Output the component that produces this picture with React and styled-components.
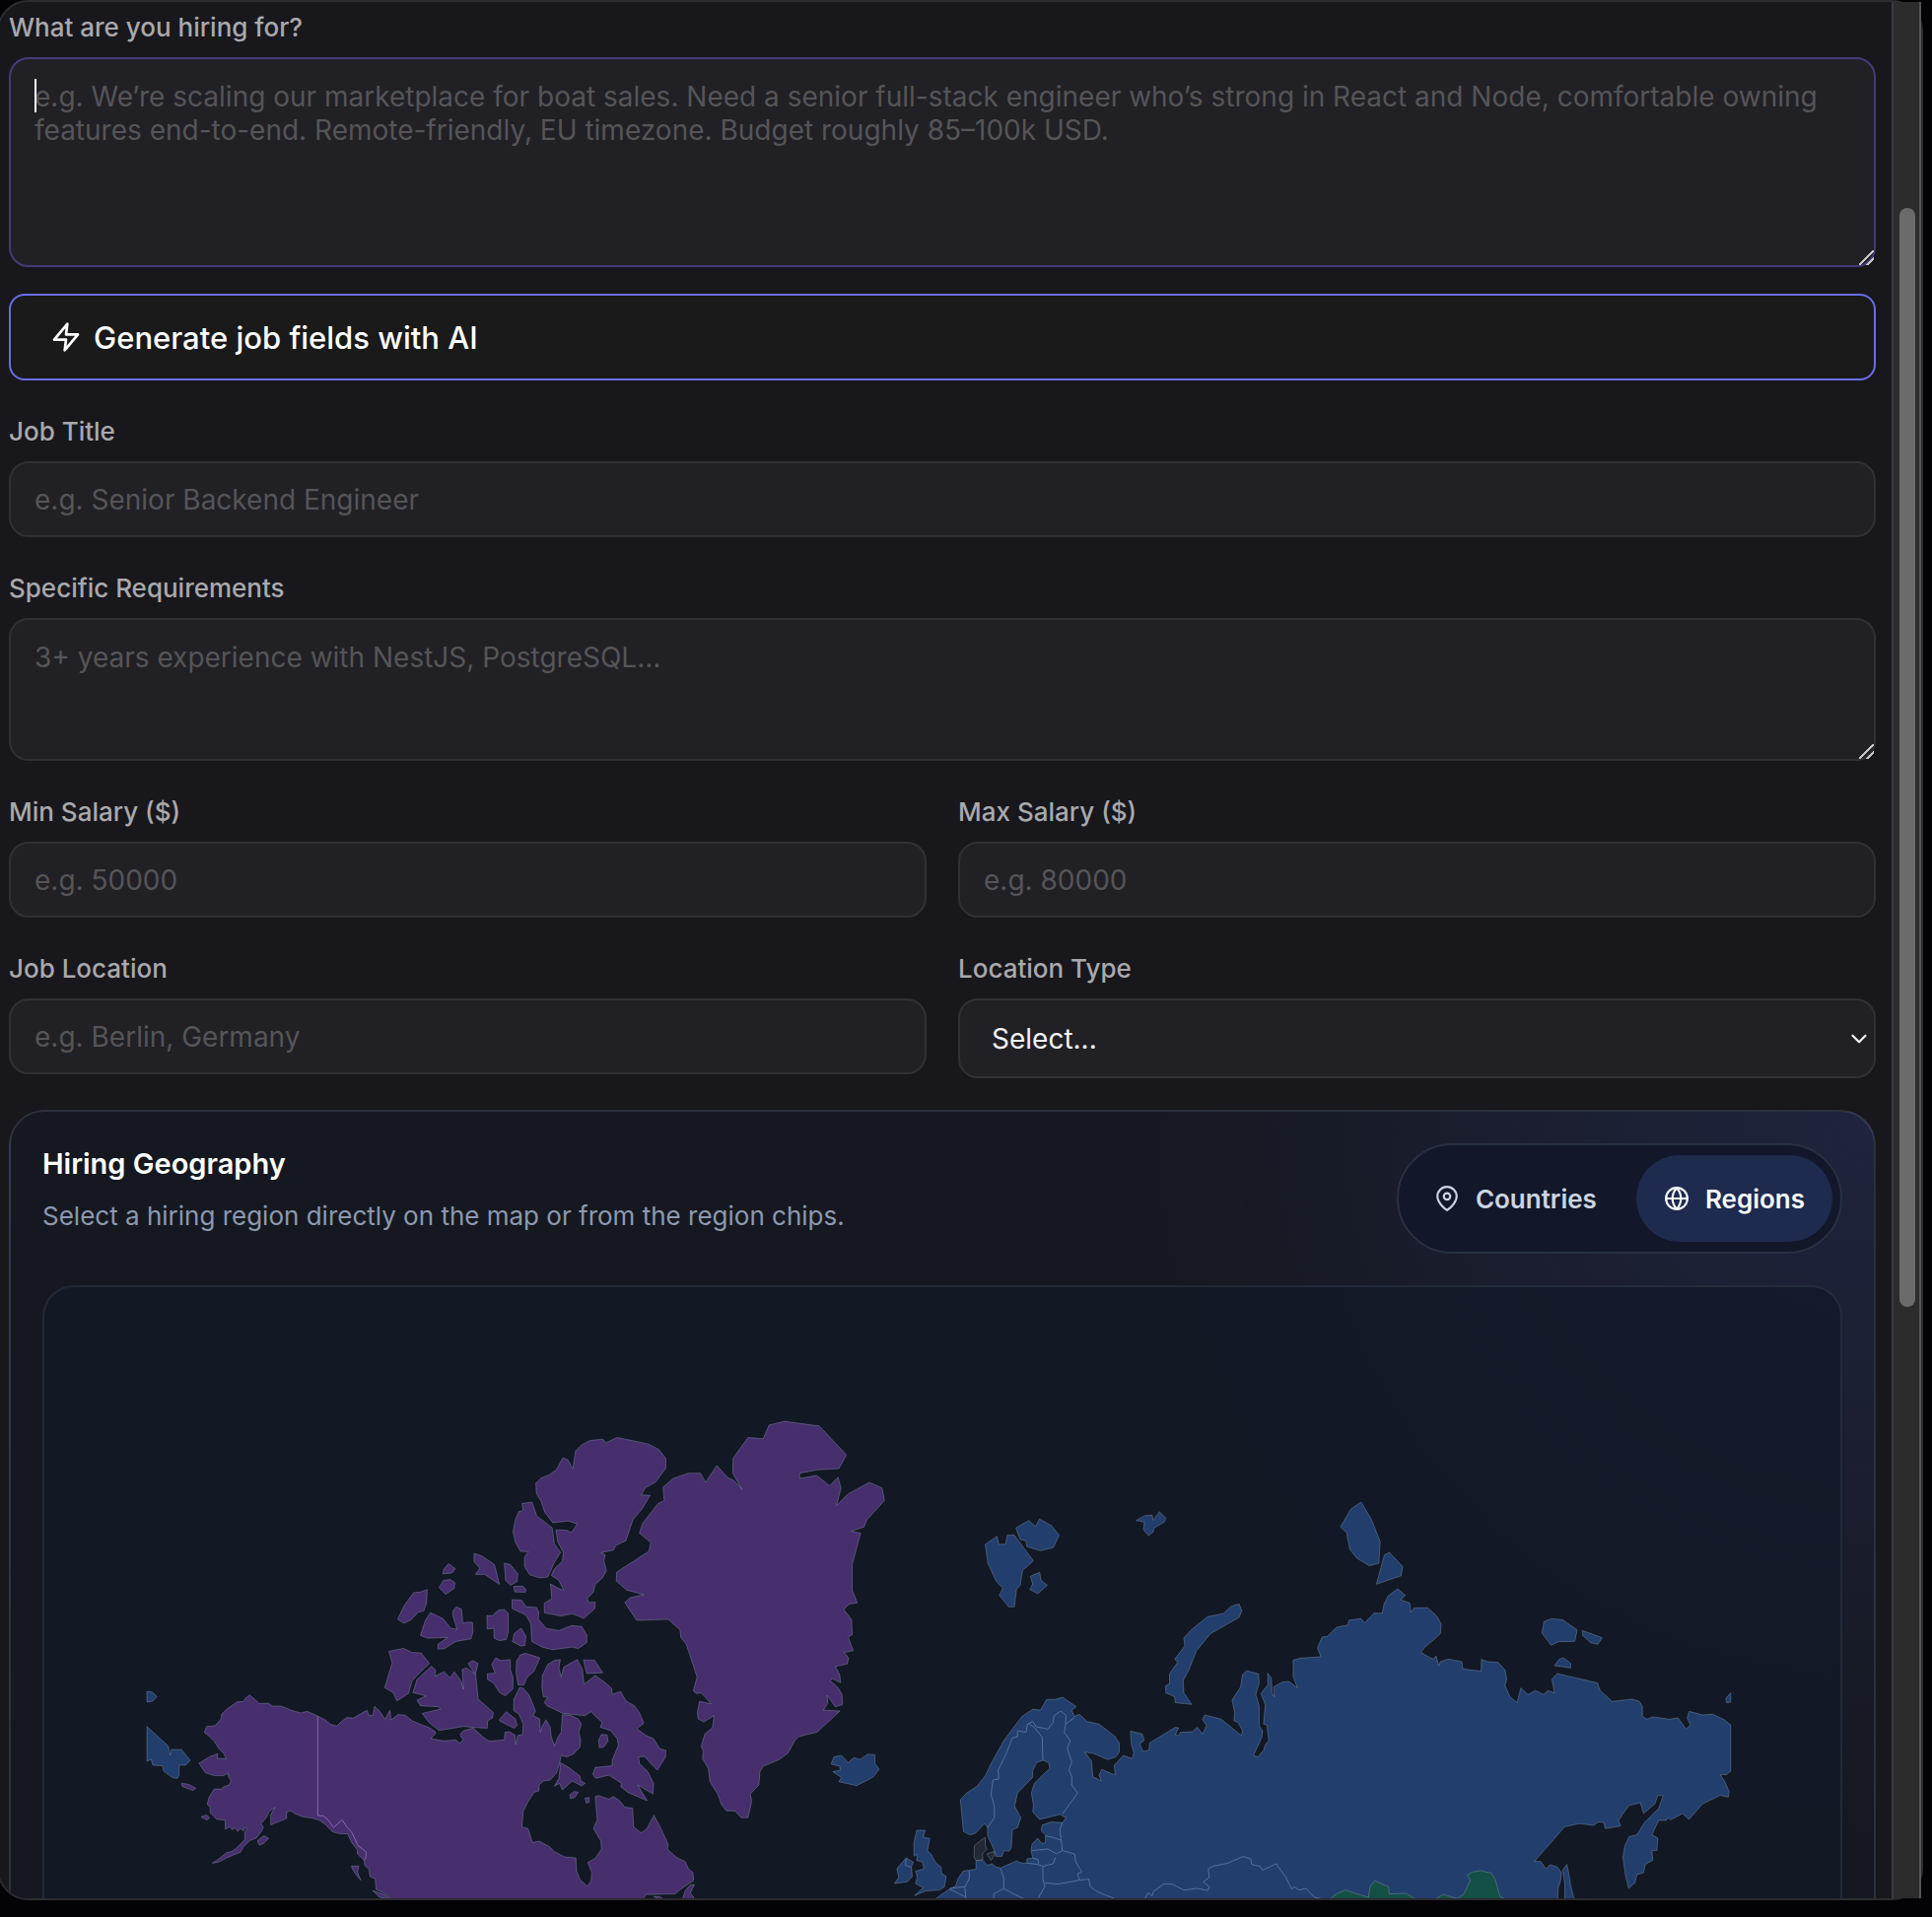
import { useState } from "react";
import styled, { createGlobalStyle } from "styled-components";
import { FiChevronDown, FiGlobe, FiMapPin, FiZap } from "react-icons/fi";

const GlobalStyle = createGlobalStyle`
  * { box-sizing: border-box; }
  body {
    margin: 0;
    background: #030305;
    font-family: Inter, "Liberation Sans", sans-serif;
  }
  button, input, textarea, select { font-family: inherit; }
`;

const Page = styled.div`
  height: 100vh;
  padding: 0 9px 17px 0;
  overflow: hidden;
`;

const Dialog = styled.main`
  display: flex;
  height: 100%;
  margin-left: -3px;
  border: 2px solid #2c2b30;
  border-radius: 32px;
  background: #18171c;
`;

const Scroller = styled.div`
  flex: 1;
  min-width: 0;
  overflow: hidden;
  padding: 10px 16px 0 10px;
  border-radius: 30px 0 0 30px;
`;

const ScrollTrack = styled.div`
  display: flex;
  flex-direction: column;
  flex: none;
  width: 30px;
  padding: 0 4px 0 6px;
  border: solid #3b3b3d;
  border-width: 0 2px;
  border-right-color: #555557;
  background: #2c2c2c;

  &::before { content: ""; flex: 209; }
  &::after { content: ""; flex: 600; }
`;

const ScrollThumb = styled.div`
  flex: 1115;
  border-radius: 8px;
  background: #6b6b6b;
`;

const Form = styled.form`
  display: flex;
  flex-direction: column;
  gap: 36px;
`;

const Group = styled.div`
  display: flex;
  flex-direction: column;
  gap: 27px;
`;

const Columns = styled.div`
  display: grid;
  grid-template-columns: 1fr 1fr;
  align-items: start;
  gap: 36px 32px;
`;

const Field = styled.div`
  display: flex;
  flex-direction: column;
  gap: 14px;
  min-width: 0;
`;

const Label = styled.label`
  color: #a9a9ac;
  font-size: 26px;
  font-weight: 500;
  line-height: 32px;
`;

const Input = styled.input`
  width: 100%;
  height: 77px;
  padding: 1px 24px 0;
  border: 2px solid #303035;
  border-radius: 20px;
  outline: none;
  background: #212025;
  color: #f4f4f5;
  font-size: 28px;
  line-height: 34px;

  &::placeholder { color: #555558; opacity: 1; }
`;

const TextArea = styled(Input).attrs({ as: "textarea" })`
  display: block;
  height: ${(props) => props.$height}px;
  padding: 21px 24px;
  border-color: ${(props) => (props.$active ? "#433c78" : "#303035")};
  resize: vertical;

  &::-webkit-resizer {
    background: linear-gradient(
      135deg,
      transparent 46%,
      #c4c4c6 46% 54%,
      transparent 54% 73%,
      #c4c4c6 73% 81%,
      transparent 81%
    );
  }
`;

const CaretWrap = styled.div`
  position: relative;
`;

const Caret = styled.span`
  position: absolute;
  top: 22px;
  left: 26px;
  width: 2px;
  height: 34px;
  background: #fff;
`;

const SelectWrap = styled.div`
  display: grid;
  align-items: center;

  > * { grid-area: 1 / 1; }

  svg {
    justify-self: end;
    margin-right: 4px;
    color: #f4f4f5;
    pointer-events: none;
  }
`;

const Select = styled(Input).attrs({ as: "select" })`
  height: 81px;
  padding: 0 32px;
  appearance: none;
`;

const GenerateButton = styled.button`
  display: flex;
  align-items: center;
  gap: 12px;
  width: 100%;
  height: 88px;
  padding: 0 40px;
  border: 2px solid #6a6ee8;
  border-radius: 16px;
  background: #1a1a1a;
  color: #fff;
  font-size: 31px;
  font-weight: 500;
`;

const GeoCard = styled.section`
  margin-top: 32px;
  padding: 32px;
  border: 2px solid rgba(148, 163, 184, 0.18);
  border-radius: 36px;
  background:
    radial-gradient(circle 740px at top right, rgba(72, 84, 180, 0.2), transparent),
    #151820;
`;

const GeoHeader = styled.div`
  display: flex;
  justify-content: space-between;
  align-items: flex-start;
  margin-bottom: 32px;
`;

const GeoText = styled.div`
  display: flex;
  flex-direction: column;
  gap: 12px;
`;

const GeoTitle = styled.h2`
  margin: 0;
  color: #fff;
  font-size: 29px;
  font-weight: 600;
  line-height: 42px;
`;

const GeoHint = styled.p`
  margin: 0;
  color: #8d99ae;
  font-size: 26px;
  line-height: 39px;
`;

const Toggle = styled.div`
  display: flex;
  gap: 12px;
  padding: 10px 8px;
  border: 2px solid #283043;
  border-radius: 56px;
  background: #12182a;
`;

const ToggleButton = styled.button`
  display: flex;
  align-items: center;
  gap: 16px;
  height: 88px;
  padding: 0 28px;
  border: 0;
  border-radius: 44px;
  background: ${(props) => (props.$active ? "#1f2a4f" : "transparent")};
  color: ${(props) => (props.$active ? "#f8fafc" : "#cbd5e1")};
  font-size: 26px;
  font-weight: 600;
`;

const MapBox = styled.div`
  overflow: hidden;
  border: 2px solid rgba(148, 163, 184, 0.13);
  border-radius: 32px;
  background: rgba(17, 24, 38, 0.7);
`;

const MapSvg = styled.svg`
  display: block;
  width: 100%;

  polygon, polyline {
    stroke-width: 1;
    stroke-linejoin: round;
  }
`;

const RegionShape = styled.polygon`
  fill: ${(props) => props.$fill};
  stroke: rgba(148, 163, 184, 0.38);
`;

const BorderLine = styled.polyline`
  fill: none;
  stroke: ${(props) => props.$stroke};
`;

// each sheet of the map has its own grid, this puts the points on the svg
const sheet = (ox, oy, kx, ky) => (points) =>
  points
    .trim()
    .split(/\s+/)
    .map((pair) => {
      const [x, y] = pair.split(",").map(Number);
      return (ox + x * kx).toFixed(1) + "," + (oy + y * ky).toFixed(1);
    })
    .join(" ");

const alaska = sheet(85, 195, 0.3333, 0.3333);
const arctic = sheet(335, 115, 0.3444, 0.3348);
const europe = sheet(815, 195, 0.3444, 0.3333);
const siberia = sheet(1255, 195, 0.4209, 0.3333);

const northAmerica = [
  // alaska coast, canada west coast, then back along the arctic coast
  [
    alaska(`577,720 545,706 525,711 497,703 466,690 440,690 425,681 400,683 388,672 370,656 357,666 350,677
      332,677 300,700 285,714 282,730 265,750 239,752 232,770 248,783 262,797 278,822 290,833 298,850 272,850
      272,835 250,843 215,864 235,893 262,902 290,902 306,894 304,903 313,917 308,930 290,936 285,943 262,942
      245,970 241,990 249,997 250,1015 270,1035 295,1037 296,1065 308,1058 318,1067 325,1060 334,1072 340,1063
      352,1070 355,1060 362,1063 355,1075 355,1097 330,1122 315,1133 300,1136 270,1160 256,1168 275,1165
      300,1152 325,1142 342,1135 350,1120 370,1100 390,1092 405,1072 412,1060 404,1048 418,1033 430,1010
      447,998 434,1020 434,1052 450,1045 482,1032 483,1012 495,1009 508,1018 530,1027 560,1031 580,1037
      600,1050 622,1073 640,1078 668,1079 680,1105 697,1127 698,1140 718,1160 720,1175 732,1187 737,1210
      752,1215 755,1248 775,1257 805,1280 820,1300`),
    arctic(`780,1530 790,1512 800,1497 885,1495 910,1475 940,1455 938,1430 925,1420 915,1397 890,1385 863,1360
      865,1345 840,1290 823,1257 802,1298 785,1310 763,1292 760,1235 737,1232 722,1213 705,1200 690,1208
      660,1197 650,1200 656,1270 645,1297 667,1335 668,1360 650,1387 628,1400 640,1430 638,1455 627,1472
      605,1452 595,1425 593,1386 560,1383 530,1367 515,1352 485,1335 465,1340 452,1297 434,1293 438,1245
      452,1215 470,1187 484,1183 485,1165 497,1153 517,1150 535,1130 545,1100 550,1075 565,1080 585,1072
      605,1050 607,1030 602,1005 609,980 600,965 575,953 553,952 550,1005 540,1020 530,1047 520,1017 517,990
      505,967 495,985 488,1005 487,965 467,955 474,942 470,930 455,892 438,872 427,870 410,905 410,940
      425,950 438,980 436,1012 422,1015 416,1042`),
    alaska(`1177,777 1160,768 1147,770 1145,793 1100,797 1080,785 1065,770 1050,757 1020,765 1010,777 1020,793
      1008,803 998,793 960,796 921,789 935,775 935,768 915,755 890,746 865,735 843,718 822,716 800,732
      797,703 782,730 765,705 750,691 745,718 734,720 727,703 710,712 685,727 665,725 650,737 635,751
      615,745 600,732`),
  ].join(" "),
  // greenland
  arctic(`713,520 808,457 814,430 780,402 790,372 835,312 853,303 850,262 880,236 925,220 960,220 975,248
    1008,197 1040,233 1060,243 1083,270 1055,220 1056,175 1100,112 1145,116 1162,74 1208,63 1310,77 1390,165
    1368,206 1305,210 1252,220 1252,236 1302,227 1341,258 1365,232 1374,265 1361,318 1395,283 1458,248
    1495,265 1502,303 1450,362 1442,383 1404,396 1432,402 1407,495 1407,575 1422,613 1398,617 1382,633
    1405,664 1407,710 1395,716 1410,758 1383,763 1396,780 1393,798 1357,806 1370,830 1373,855 1347,842
    1343,850 1365,870 1377,890 1378,922 1357,928 1333,893 1335,918 1322,938 1371,941 1303,1005 1250,1018
    1237,1032 1218,1068 1192,1088 1145,1108 1135,1125 1132,1165 1107,1192 1111,1215 1100,1264 1080,1264
    1062,1244 1036,1243 1022,1225 1012,1195 988,1155 983,1115 966,1085 968,1060 962,1048 973,1010 995,992
    1000,955 970,974 953,965 951,945 957,912 992,919 962,886 947,888 939,879 950,838 918,738 902,717
    900,695 865,663 772,666 737,612 753,597 793,588 742,574 712,547`),
  // ellesmere, axel heiberg
  arctic(`475,250 490,235 515,225 535,210 555,173 570,180 584,208 592,152 610,134 635,121 673,117 680,128
    715,112 805,131 837,148 858,175 858,205 828,247 797,265 785,286 812,287 787,330 762,360 740,425 710,440
    704,453 667,461 680,468 675,485 683,515 672,537 650,557 645,580 627,600 630,612 650,611 649,630 617,660
    583,646 548,653 500,643 500,614 522,601 518,556 537,567 557,575 543,545 521,530 530,510 553,487 556,460
    540,430 534,392 566,393 580,400 597,374 570,365 525,370 502,340 490,305 477,283`),
  arctic(`434,312 464,308 478,350 523,385 530,435 548,460 530,490 510,535 485,537 457,528 442,503 442,475
    453,458 430,457 415,430 408,398 415,360 425,337 438,332`),
  // baffin
  arctic(`493,870 494,835 510,800 530,787 547,785 543,810 550,838 557,808 597,785 612,815 617,860 650,833
    680,855 698,872 700,890 725,882 740,910 765,925 780,945 793,978 772,995 800,1015 822,1025 840,1055
    858,1060 857,1080 833,1120 805,1090 795,1078 778,1080 780,1100 805,1125 822,1160 820,1192 775,1165
    803,1213 745,1187 725,1170 728,1160 690,1135 652,1145 643,1133 650,1112 700,1107 700,1090 718,1045
    715,1025 695,1000 665,990 670,975 637,943 620,955 555,948 508,925 500,915 510,900 497,897`),
  // smaller arctic islands
  arctic(`293,463 318,472 353,497 368,557 325,527 297,527 310,508 293,488`),
  arctic(`382,493 400,497 422,525 420,548 400,560 386,545`),
  arctic(`410,563 437,563 446,573 444,581 413,580`),
  arctic(`218,494 238,510 228,523 201,525 203,513`),
  arctic(`190,567 203,545 222,542 237,552 234,570 209,587`),
  arctic(`68,663 88,620 115,582 135,580 155,573 153,615 145,637 128,642 107,665 86,675`),
  arctic(`135,712 150,665 165,643 200,660 225,690 243,693 230,650 232,635 241,625 256,632 260,675 272,672
    288,672 290,700 284,722 240,730 205,752 186,753 187,738 215,718 155,720`),
  arctic(`331,652 347,652 365,635 382,633 394,645 394,700 388,724 368,728 352,720 352,690 332,692`),
  arctic(`405,603 433,605 447,625 477,627 484,642 482,662 505,690 543,697 580,682 610,685 625,710 625,733
    600,752 583,747 525,755 495,748 463,730 460,675 445,650 405,630`),
  arctic(`406,730 412,705 432,690 446,715 443,742 430,744`),
  arctic(`42,760 85,751 110,763 137,765 162,797 145,812 110,850 100,888 66,910 55,885 30,870 52,795`),
  arctic(`168,805 180,818 177,835 205,822 222,840 235,822 255,850 262,875 258,815 270,810 298,830 305,905
    350,945 347,962 333,970 332,993 260,988 190,1000 160,975 140,948 195,935 188,928 135,925 125,908 152,895
    113,885 125,845`),
  arctic(`275,797 290,788 305,797 297,830 285,812`),
  arctic(`345,800 357,780 372,788 400,785 400,817 408,840 407,875 385,895 368,885 352,858 333,845 332,828
    355,826`),
  arctic(`417,825 418,790 430,770 445,766 487,780 470,820 450,838 440,862 423,862`),
  arctic(`367,967 388,943 415,965 420,985 412,993 370,972`),
  arctic(`615,786 648,787 672,825 625,827`),
  arctic(`660,1030 668,1012 685,1013 688,1032 675,1050 662,1052`),
  arctic(`548,1098 572,1112 605,1138 607,1152 620,1160 610,1168 582,1153 553,1180 545,1160 530,1168 543,1145`),
  arctic(`575,1195 587,1185 600,1187 590,1203 577,1206`),
  arctic(`620,1205 632,1203 632,1217 624,1220`),
  arctic(`905,1520 915,1485 930,1468 942,1467 930,1492 940,1505 935,1520`),
  arctic(`822,1503 840,1504 852,1511 838,1511`),
  // pacific islands
  alaska(`393,1100 413,1085 428,1093 412,1108 400,1114`),
  alaska(`163,925 183,928 206,940 197,947 165,935`),
  alaska(`222,1027 240,1022 248,1030 240,1037`),
  alaska(`680,1177 702,1177 698,1195 708,1220 695,1205 683,1187`),
  alaska(`745,1252 775,1262 798,1278 765,1272`),
];

const eurasia = [
  [
    europe(`240,1290 258,1277 300,1247 318,1238 325,1215 340,1192 358,1190 378,1187 378,1160 398,1160 412,1175
      425,1170 437,1180 450,1183 497,1161 512,1168 528,1168 528,1155 545,1153 540,1130 543,1110 560,1092
      570,1107 582,1107 583,1083 570,1070 573,1052 600,1043 633,1045 643,1030 625,1020 565,1035 545,1012
      547,990 541,955 550,925 595,880 592,862 575,855 557,862 545,885 545,907 500,955 492,995 510,1030
      500,1060 485,1067 482,1120 475,1132 460,1130 455,1147 437,1148 430,1125 412,1085 412,1060 403,1047
      377,1077 360,1082 341,1072 332,975 350,955 378,937 405,903 420,870 460,795 500,740 515,720 545,700
      568,702 586,670 610,670 633,663 673,692 660,703 668,722 683,715 705,737 740,745 785,780 800,802
      800,830 790,845 765,853 725,835 698,830 718,857 722,905 747,918 740,900 748,883 788,900 785,870
      812,840 838,850 843,832 835,805 833,766 868,775 873,795 860,805 870,828 887,825 890,802 965,755
      975,756 965,778 975,780 980,770 1015,768 1030,755 1045,775 1057,750 1045,730 1052,717 1100,730
      1160,780 1163,765 1150,740 1138,735 1140,710 1132,672 1157,632 1163,595 1175,582 1210,592 1212,620
      1202,655 1212,690 1212,750 1222,765 1220,785 1195,840 1207,845 1225,825 1230,808 1240,795 1235,748
      1225,745 1230,685 1217,652 1238,625 1237,590 1248,605 1250,650 1257,662 1255,632 1280,617 1300,615
      1325,635 1312,600 1312,550 1335,544`),
    siberia(`95,540 87,513 98,480 110,478 133,450 160,443 163,428 192,424 200,437 223,407 243,407 247,380
      257,355 280,333 299,353 287,367 309,376 312,405 320,391 353,391 375,417 385,440 383,470 345,512
      336,527 365,547 373,538 379,568 383,555 402,547 435,555 437,577 481,584 482,548 497,555 522,557
      539,580 543,608 539,628 550,660 568,680 577,635 594,655 612,643 632,655 642,643 658,650 652,608
      665,591 762,620 768,643 797,676 845,669 862,675 870,690 870,722 881,730 895,723 935,730 956,726
      975,760 986,747 978,727 983,706 1015,717 1040,715 1068,732 1083,748 1083,888 1073,899 1057,899
      1068,918 1079,950 1077,967 1057,962 1015,988 982,1035 967,1017 938,1037 932,1030 927,1038 909,1038
      893,1082 907,1092 905,1130 893,1130 895,1160 877,1172 873,1197 857,1203 852,1228 837,1245 830,1210
      823,1150 828,1115 838,1088 857,1082 875,1045 910,1000 920,963 907,962 900,988 873,1017 865,984
      837,993 812,1038 818,1055 780,1063 778,1045 765,1043 752,1053 718,1048 683,1057 610,1163 625,1163
      637,1185 648,1173 665,1180 675,1197 673,1220 667,1245 666,1290`),
  ].join(" "),
  // chukotka, cut off by the date line
  alaska(`57,752 122,812 128,840 132,822 163,823 189,855 175,870 155,870 155,900 150,910 135,908 108,888
    105,872 75,870 70,852 57,858`),
  alaska(`57,645 72,647 88,661 75,675 57,678`),
  siberia(`1083,650 1071,667 1073,680 1083,678`),
  // iceland
  arctic(`1345,1102 1353,1080 1375,1075 1395,1097 1412,1082 1430,1088 1452,1072 1474,1073 1474,1100 1486,1117
    1468,1142 1420,1167 1367,1155 1376,1143 1350,1125 1372,1120 1370,1108`),
  // svalbard, franz josef land, novaya zemlya
  europe(`405,198 440,173 445,198 465,197 470,170 490,169 547,248 515,277 508,322 497,335 491,388 474,388
    447,353 457,330 437,310 413,255`),
  europe(`495,148 533,125 553,143 565,121 600,140 623,170 605,208 567,217 528,205 525,187 508,183`),
  europe(`538,295 565,283 570,308 588,322 560,348 537,335 545,318`),
  europe(`850,125 875,110 897,109 900,125 918,98 937,118 933,130 902,148 900,160 886,171 871,153 874,130`),
  europe(`937,628 948,622 948,592 972,557 963,548 993,507 990,482 1012,458 1060,418 1107,408 1128,387 1153,379
    1161,400 1153,420 1068,470 1027,522 1005,580 988,612 990,650 1013,685 965,680 963,662 937,650`),
  // severnaya zemlya, new siberian islands, sakhalin
  siberia(`142,145 168,90 192,69 217,122 238,190 235,255 212,263 182,240 165,213 157,162`),
  siberia(`229,319 248,230 260,222 292,265 289,293`),
  siberia(`628,468 633,433 650,424 677,427 713,458 707,493 668,494 650,505`),
  siberia(`725,460 773,482 763,502 745,497 726,475`),
  siberia(`658,567 670,547 680,543 697,560 697,574`),
  siberia(`678,1190 688,1172 692,1195 697,1235 708,1290 683,1290 683,1230`),
  // great britain, ireland
  europe(`195,1107 203,1068 228,1068 222,1090 242,1093 235,1130 245,1140 260,1168 275,1180 277,1200 290,1208
    285,1240 270,1250 230,1253 197,1267 222,1243 200,1230 205,1210 200,1193 225,1185 220,1165 203,1160
    205,1140 195,1147`),
  europe(`145,1185 172,1152 193,1165 188,1180 190,1210 175,1225 138,1230 150,1212`),
];

const asia = [
  siberia(`100,1290 117,1277 135,1260 155,1250 178,1260 210,1272 213,1240 225,1222 258,1240 260,1262 300,1260
    322,1277 330,1290`),
  siberia(`360,1290 372,1277 390,1263 412,1272 425,1275 440,1262 455,1220 448,1205 460,1195 480,1191 505,1198
    515,1217 527,1270 560,1290`),
];

const unassigned = [
  europe(`372,1150 373,1115 388,1102 405,1090 405,1115 410,1125 397,1140 398,1158 378,1160`),
  europe(`410,1140 432,1132 432,1145 422,1160`),
];

const alaskaBorder = alaska(`577,720 577,1023 595,1025 610,1038 625,1060 638,1048 652,1037 665,1057 680,1073
  700,1115 725,1134 723,1152 718,1160`);

const europeBorders = [
  europe(`412,1060 432,1030 432,995 422,960 428,915 445,912 443,885 465,840 485,787 500,783 500,765 525,770
    530,745 545,737 555,753 590,760 605,740 607,720 627,705 643,718 642,745 668,725`),
  europe(`532,742 550,755 573,785 575,855`),
  europe(`642,745 638,770 655,795 647,820 660,860 652,885 660,905 660,930 677,955 633,1018`),
  europe(`633,1045 625,1065 628,1090 632,1130`),
  europe(`583,1085 605,1090 628,1098`),
  europe(`543,1130 590,1125 615,1140 632,1130 668,1140 672,1165 690,1195 677,1200 683,1220`),
  europe(`528,1168 560,1172 575,1178 605,1170 612,1150`),
  europe(`545,1153 560,1157 562,1170`),
  europe(`575,1178 575,1215 580,1240 560,1277`),
  europe(`580,1228 620,1232 683,1220 710,1217 715,1240 735,1255 788,1277`),
  europe(`450,1183 460,1215 460,1245 485,1260 520,1277`),
  europe(`460,1245 430,1262 430,1277`),
  europe(`358,1190 358,1215 345,1240 348,1277`),
  europe(`300,1245 345,1240`),
  europe(`300,1247 345,1270`),
  europe(`172,1155 170,1175 188,1180`),
  europe(`875,1277 885,1258 897,1268 900,1255 930,1232 955,1232 990,1250 1030,1245 1060,1252 1065,1240
    1047,1225 1065,1212 1062,1185 1075,1178 1120,1168 1165,1148 1187,1155 1190,1172 1215,1178 1222,1190
    1262,1170 1290,1210 1308,1248 1315,1240 1330,1250 1350,1245 1375,1272 1398,1277`),
];

const regions = [
  { name: "North America", fill: "#472e6d", shapes: northAmerica },
  { name: "Europe", fill: "#213e6d", shapes: eurasia },
  { name: "Asia", fill: "#145044", shapes: asia },
  { name: "Unassigned", fill: "#232935", shapes: unassigned },
];

function RegionMap() {
  return (
    <MapSvg viewBox="0 0 1822 660" role="img" aria-label="World map of hiring regions">
      {regions.map((region) => (
        <g key={region.name}>
          {region.shapes.map((points, i) => (
            <RegionShape key={i} $fill={region.fill} points={points} />
          ))}
        </g>
      ))}
      <BorderLine $stroke="#8668a6" points={alaskaBorder} />
      {europeBorders.map((points, i) => (
        <BorderLine key={i} $stroke="#566f9e" points={points} />
      ))}
    </MapSvg>
  );
}

function TextField({ id, label, placeholder }) {
  return (
    <Field>
      <Label htmlFor={id}>{label}</Label>
      <Input id={id} placeholder={placeholder} />
    </Field>
  );
}

export default function App() {
  const [mode, setMode] = useState("regions");
  const [brief, setBrief] = useState("");

  return (
    <Page>
      <GlobalStyle />
      <Dialog>
        <Scroller>
          <Form onSubmit={(e) => e.preventDefault()}>
            <Group>
              <Field>
                <Label htmlFor="brief">What are you hiring for?</Label>
                <CaretWrap>
                  <TextArea
                    id="brief"
                    $height={213}
                    $active
                    value={brief}
                    onChange={(e) => setBrief(e.target.value)}
                    placeholder="e.g. We’re scaling our marketplace for boat sales. Need a senior full-stack engineer who’s strong in React and Node, comfortable owning features end-to-end. Remote-friendly, EU timezone. Budget roughly 85–100k USD."
                  />
                  {brief === "" ? <Caret /> : null}
                </CaretWrap>
              </Field>
              <GenerateButton type="button">
                <FiZap size={32} />
                Generate job fields with AI
              </GenerateButton>
            </Group>

            <TextField id="title" label="Job Title" placeholder="e.g. Senior Backend Engineer" />

            <Field>
              <Label htmlFor="requirements">Specific Requirements</Label>
              <TextArea
                id="requirements"
                $height={145}
                placeholder="3+ years experience with NestJS, PostgreSQL..."
              />
            </Field>

            <Columns>
              <TextField id="min" label="Min Salary ($)" placeholder="e.g. 50000" />
              <TextField id="max" label="Max Salary ($)" placeholder="e.g. 80000" />
              <TextField id="location" label="Job Location" placeholder="e.g. Berlin, Germany" />
              <Field>
                <Label htmlFor="type">Location Type</Label>
                <SelectWrap>
                  <Select id="type">
                    <option>Select...</option>
                    <option>Remote</option>
                    <option>Hybrid</option>
                    <option>On-site</option>
                  </Select>
                  <FiChevronDown size={26} />
                </SelectWrap>
              </Field>
            </Columns>
          </Form>

          <GeoCard>
            <GeoHeader>
              <GeoText>
                <GeoTitle>Hiring Geography</GeoTitle>
                <GeoHint>Select a hiring region directly on the map or from the region chips.</GeoHint>
              </GeoText>
              <Toggle>
                <ToggleButton $active={mode === "countries"} onClick={() => setMode("countries")}>
                  <FiMapPin size={26} />
                  Countries
                </ToggleButton>
                <ToggleButton $active={mode === "regions"} onClick={() => setMode("regions")}>
                  <FiGlobe size={26} />
                  Regions
                </ToggleButton>
              </Toggle>
            </GeoHeader>
            <MapBox>
              <RegionMap />
            </MapBox>
          </GeoCard>
        </Scroller>
        <ScrollTrack>
          <ScrollThumb />
        </ScrollTrack>
      </Dialog>
    </Page>
  );
}
